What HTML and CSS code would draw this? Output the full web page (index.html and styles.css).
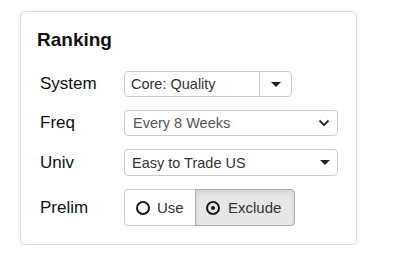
FILE: index.html
```html
<!DOCTYPE html>
<html lang="en">
<head>
    <meta charset="UTF-8">
    <title>Ranking</title>
    <link rel="stylesheet" href="styles.css">
</head>
<body>

    <div class="card">
        <h2 class="card-title">Ranking</h2>

        <div class="form-row">
            <label class="row-label">System</label>
            <div class="combo">
                <span class="combo-value">Core: Quality</span>
                <span class="combo-btn"><span class="caret"></span></span>
            </div>
        </div>

        <div class="form-row">
            <label class="row-label">Freq</label>
            <div class="select select-native">
                <span class="select-value muted">Every 8 Weeks</span>
                <svg class="chevron" width="12" height="8" viewBox="0 0 12 8">
                    <path d="M1.5 1.5 L6 6 L10.5 1.5" fill="none" stroke="#333" stroke-width="2"/>
                </svg>
            </div>
        </div>

        <div class="form-row">
            <label class="row-label">Univ</label>
            <div class="select">
                <span class="select-value">Easy to Trade US</span>
                <span class="caret"></span>
            </div>
        </div>

        <div class="form-row">
            <label class="row-label">Prelim</label>
            <div class="btn-group">
                <button class="btn"><span class="radio"></span>Use</button>
                <button class="btn active"><span class="radio checked"></span>Exclude</button>
            </div>
        </div>
    </div>

</body>
</html>
```

FILE: styles.css
```css
body {
    margin: 0;
    padding: 0;
    font-family: "Liberation Sans", Arial, sans-serif;
    color: #222;
    background: #fff;
}

.card {
    box-sizing: border-box;
    width: 337px;
    height: 234px;
    margin: 11px 0 0 20px;
    padding: 17px 18px 0 16px;
    border: 1px solid #dedede;
    border-radius: 6px;
    box-shadow: 0 1px 4px rgba(0, 0, 0, 0.12);
}

.card-title {
    margin: 0 0 20px 0;
    font-size: 19px;
    line-height: 22px;
    font-weight: bold;
    color: #111;
}

.form-row {
    display: flex;
    align-items: center;
    margin-bottom: 13px;
}

.row-label {
    width: 87px;
    padding-left: 3px;
    box-sizing: border-box;
    font-size: 17px;
    color: #111;
}

.combo {
    display: flex;
    height: 26px;
    width: 168px;
    box-sizing: border-box;
    border: 1px solid #ccc;
    border-radius: 4px;
    font-size: 14.5px;
    color: #333;
}

.combo-value {
    flex: 1;
    padding-left: 6px;
    line-height: 24px;
    border-right: 1px solid #ccc;
}

.combo-btn {
    width: 31px;
    display: flex;
    align-items: center;
    justify-content: center;
}

.caret {
    width: 0;
    height: 0;
    border-left: 5px solid transparent;
    border-right: 5px solid transparent;
    border-top: 5px solid #222;
}

.select {
    display: flex;
    align-items: center;
    justify-content: space-between;
    width: 214px;
    height: 27px;
    box-sizing: border-box;
    padding: 0 7px 0 7px;
    border: 1px solid #ccc;
    border-radius: 4px;
    font-size: 14.5px;
    color: #333;
}

.select-native {
    height: 26px;
    padding-left: 8px;
}

.muted {
    color: #555;
}

.btn-group {
    display: flex;
}

.btn {
    display: flex;
    align-items: center;
    box-sizing: border-box;
    height: 37px;
    padding: 0 0 0 11px;
    background: #fff;
    border: 1px solid #ccc;
    font-family: "Liberation Sans", Arial, sans-serif;
    font-size: 15px;
    color: #333;
}

.btn:first-child {
    border-radius: 4px 0 0 4px;
    width: 72px;
}

.btn:last-child {
    border-radius: 0 4px 4px 0;
    margin-left: -1px;
    width: 100px;
    padding-left: 10px;
}

.btn.active {
    background: #e6e6e6;
    border-color: #adadad;
    box-shadow: inset 0 3px 5px rgba(0, 0, 0, 0.08);
}

.radio {
    flex-shrink: 0;
    box-sizing: border-box;
    width: 14px;
    height: 14px;
    margin-right: 7px;
    border: 2px solid #1a1a1a;
    border-radius: 50%;
    position: relative;
}

.radio.checked {
    margin-right: 8px;
}

.radio.checked::after {
    content: "";
    position: absolute;
    left: 3px;
    top: 3px;
    width: 4px;
    height: 4px;
    border-radius: 50%;
    background: #1a1a1a;
}
```
